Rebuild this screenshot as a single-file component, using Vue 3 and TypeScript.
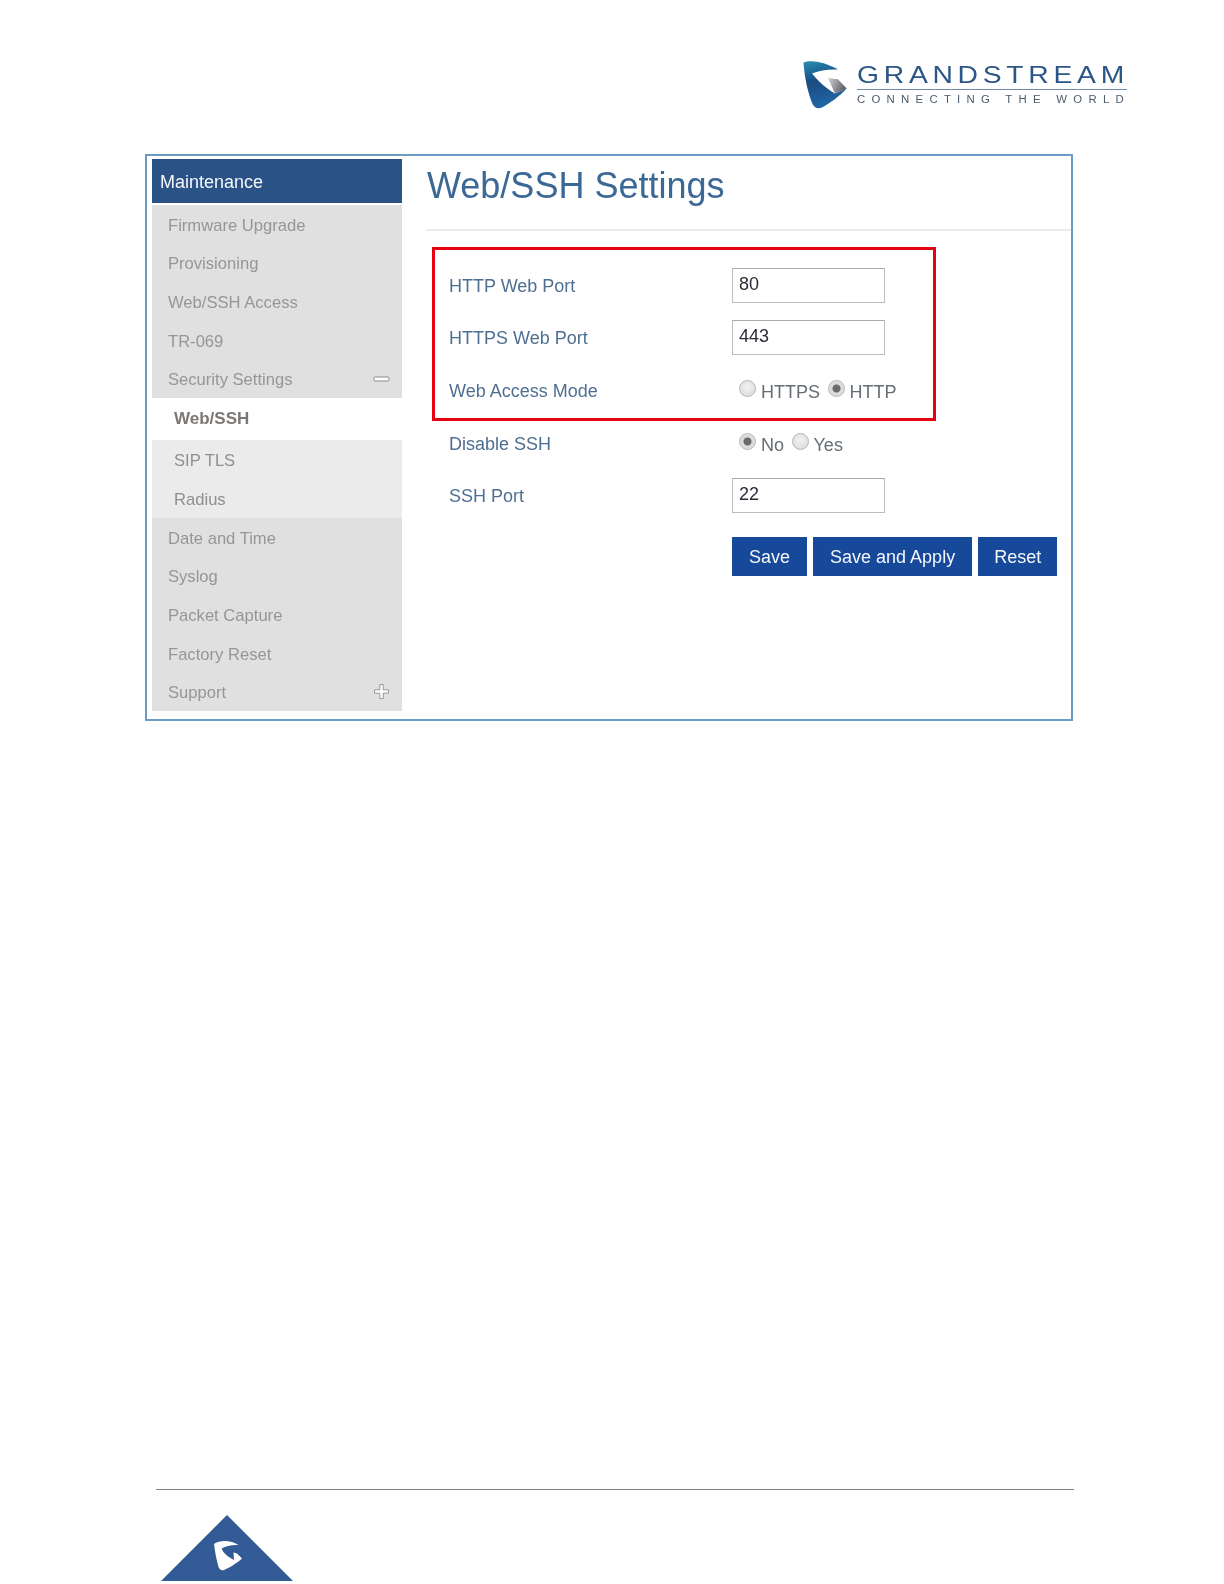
<script setup lang="ts">
interface Row { label: string; kind: 'input' | 'radio'; value?: string; options?: { text: string; on: boolean }[] }
const topItems = ['Firmware Upgrade', 'Provisioning', 'Web/SSH Access', 'TR-069', 'Security Settings']
const subItems = ['SIP TLS', 'Radius']
const lowerItems = ['Date and Time', 'Syslog', 'Packet Capture', 'Factory Reset', 'Support']
const boxed: Row[] = [
  { label: 'HTTP Web Port', kind: 'input', value: '80' },
  { label: 'HTTPS Web Port', kind: 'input', value: '443' },
  { label: 'Web Access Mode', kind: 'radio', options: [{ text: 'HTTPS', on: false }, { text: 'HTTP', on: true }] },
]
const open: Row[] = [
  { label: 'Disable SSH', kind: 'radio', options: [{ text: 'No', on: true }, { text: 'Yes', on: false }] },
  { label: 'SSH Port', kind: 'input', value: '22' },
]
const buttons = ['Save', 'Save and Apply', 'Reset']
</script>

<template>
  <div class="page">
    <header class="top">
      <svg class="logo" width="330" height="56" viewBox="0 0 330 56">
        <defs>
          <linearGradient id="gsBlue" x1="0" y1="0" x2="0.25" y2="1">
            <stop offset="0" stop-color="#2b8fb0" />
            <stop offset="0.22" stop-color="#1f6f9c" />
            <stop offset="0.45" stop-color="#1c4a80" />
            <stop offset="1" stop-color="#1f66a4" />
          </linearGradient>
          <linearGradient id="gsGray" x1="0" y1="0" x2="1" y2="0.4">
            <stop offset="0" stop-color="#d5d5d5" />
            <stop offset="1" stop-color="#5c5f63" />
          </linearGradient>
        </defs>
        <path d="M3.5 4.5C11 1.5 24 3.5 38 11.5C29 11 20 12 12 15.5C18 23 27 31 35 35.5L46.7 30.5C40 38 30 45 22 49.5C18 51 14.5 50 12.5 46C8 35 4.5 20 3.5 4.5Z" fill="url(#gsBlue)" />
        <path d="M28 20L38 21.3L46.7 30.5L35 35.5C32.5 30 30 25 28 20Z" fill="url(#gsGray)" />
        <text x="57" y="25" class="brand" textLength="272" lengthAdjust="spacingAndGlyphs">GRANDSTREAM</text>
        <rect x="57" y="31" width="270" height="1" fill="#6f8aaa" />
        <text x="57" y="45" class="tag" textLength="273" lengthAdjust="spacingAndGlyphs">CONNECTING THE WORLD</text>
      </svg>
    </header>

    <section class="panel">
      <aside class="side">
        <div class="side-head">Maintenance</div>
        <ul class="menu">
          <li v-for="item in topItems" :key="item" class="item">
            <span class="item-text">{{ item }}</span>
            <svg v-if="item === 'Security Settings'" class="ico" width="17" height="6" viewBox="0 0 17 6">
              <rect x="1" y="1" width="15" height="4" rx="1" fill="#fff" stroke="#8b8b8b" />
            </svg>
          </li>
        </ul>
        <div class="current">Web/SSH</div>
        <ul class="submenu">
          <li v-for="item in subItems" :key="item" class="subitem">{{ item }}</li>
        </ul>
        <ul class="menu">
          <li v-for="item in lowerItems" :key="item" class="item">
            <span class="item-text">{{ item }}</span>
            <svg v-if="item === 'Support'" class="ico" width="17" height="17" viewBox="0 0 17 17">
              <path d="M6.8 1.5H10.2V6.8H15.5V10.2H10.2V15.5H6.8V10.2H1.5V6.8H6.8Z" fill="#fff" stroke="#808080" stroke-width="0.8" />
            </svg>
          </li>
        </ul>
      </aside>

      <main class="main">
        <h1 class="title">Web/SSH Settings</h1>
        <div class="redbox">
          <div v-for="row in boxed" :key="row.label" class="row">
            <label class="label">{{ row.label }}</label>
            <div v-if="row.kind === 'input'" class="input">{{ row.value }}</div>
            <div v-else class="radios">
              <span v-for="o in row.options" :key="o.text" class="radio-opt">
                <i class="radio" :class="{ on: o.on }"></i>{{ o.text }}
              </span>
            </div>
          </div>
        </div>
        <div class="rest">
          <div v-for="row in open" :key="row.label" class="row">
            <label class="label">{{ row.label }}</label>
            <div v-if="row.kind === 'input'" class="input">{{ row.value }}</div>
            <div v-else class="radios">
              <span v-for="o in row.options" :key="o.text" class="radio-opt">
                <i class="radio" :class="{ on: o.on }"></i>{{ o.text }}
              </span>
            </div>
          </div>
          <div class="actions">
            <button v-for="b in buttons" :key="b" class="btn" type="button">{{ b }}</button>
          </div>
        </div>
      </main>
    </section>

    <footer class="foot">
      <div class="rule"></div>
      <svg class="tri" width="132" height="66" viewBox="0 0 132 66">
        <path d="M66 0L132 66H0Z" fill="#335c96" />
        <path d="M53 29C60 24.5 70 25.5 77.5 30C71 29.5 65 31 60.7 33.5C62 38 67 42 73 45L72.5 37.5L76 38.5L81 43.5C76 48 68 53 63 55C60 56 58.5 54 57.5 52C55.5 45 54 37 53 29Z" fill="#fff" />
      </svg>
    </footer>
  </div>
</template>

<style>
html, body { margin: 0; background: #fff; }
</style>

<style scoped>
.page {
  width: 1224px;
  height: 1584px;
  overflow: hidden;
  background: #fff;
  font-family: "Liberation Sans", Arial, sans-serif;
  display: flex;
  flex-direction: column;
}
.top {
  height: 154px;
  box-sizing: border-box;
  padding: 58px 0 0 800px;
}
.logo { display: block; filter: blur(0.4px); }
.brand {
  font-family: "Liberation Sans", sans-serif;
  font-size: 24px;
  letter-spacing: 4px;
  fill: #2c5687;
}
.tag {
  font-family: "Liberation Sans", sans-serif;
  font-size: 10px;
  letter-spacing: 5.5px;
  fill: #4d5a68;
}
.panel {
  margin-left: 145px;
  width: 928px;
  height: 567px;
  box-sizing: border-box;
  border: 2px solid #6b9bc3;
  padding: 3px 0 0 5px;
  display: flex;
}
.side { width: 250px; flex: none; filter: blur(0.35px); }
.side-head {
  height: 44px;
  line-height: 46px;
  margin-bottom: 2px;
  padding-left: 8px;
  background: #2a5286;
  color: #f4f7fa;
  font-size: 18px;
}
ul { list-style: none; margin: 0; padding: 0; }
.menu { background: #e0e0e0; }
.item {
  height: 38.6px;
  padding: 0 12px 0 16px;
  color: #969696;
  font-size: 16.6px;
  display: flex;
  justify-content: space-between;
  align-items: center;
}
.item-text { padding-top: 3px; }
.current {
  height: 42px;
  line-height: 42px;
  padding-left: 22px;
  color: #7b7774;
  font-size: 17px;
  font-weight: 700;
}
.submenu { background: #ebebeb; }
.subitem {
  height: 39px;
  line-height: 41px;
  padding-left: 22px;
  color: #8f8f8f;
  font-size: 16.6px;
}
.ico { display: block; flex: none; }
.main { flex: 1; margin-left: 24px; min-width: 0; }
.title {
  margin: 0;
  height: 72px;
  box-sizing: border-box;
  line-height: 54px;
  padding-left: 1px;
  border-bottom: 2px solid #ebebeb;
  color: #3c6896;
  font-size: 36px;
  font-weight: 400;
  filter: blur(0.3px);
}
.redbox {
  margin: 16px 0 0 6px;
  width: 504px;
  height: 174px;
  box-sizing: border-box;
  border: 3px solid #e60012;
  padding: 17px 0 0 14px;
  display: flex;
  flex-direction: column;
  gap: 16.5px;
}
.rest {
  margin: 4px 0 0 23px;
  display: flex;
  flex-direction: column;
  gap: 16.5px;
}
.row { display: flex; align-items: center; height: 36px; filter: blur(0.3px); }
.label { width: 283px; flex: none; padding-top: 2px; color: #4f6f92; font-size: 18px; }
.input {
  width: 153px;
  height: 35px;
  box-sizing: border-box;
  border: 1px solid #bdbdbd;
  border-top-color: #a9a9a9;
  padding-left: 6px;
  line-height: 31px;
  color: #2b2b3a;
  font-size: 18px;
  background: #fff;
}
.radios { display: flex; gap: 7.5px; padding: 4px 0 0 7px; color: #666d75; font-size: 18px; }
.radio-opt { display: inline-flex; align-items: center; line-height: 24px; }
.radio {
  width: 17px;
  height: 17px;
  margin: -7px 5px 0 0;
  box-sizing: border-box;
  border-radius: 50%;
  border: 1px solid #b5b5b5;
  background: radial-gradient(circle at 50% 40%, #f2f2f2, #d8d8d8);
}
.radio.on {
  background: radial-gradient(circle, #6a6a6a 0 3.5px, #d8d8d8 4.5px, #e6e6e6 100%);
}
.actions { display: flex; gap: 6px; margin: 6.5px 0 0 283px; filter: blur(0.3px); }
.btn {
  height: 39px;
  padding: 2px 17px 0;
  border: 0;
  background: #16499a;
  color: #f4f6fa;
  font-family: inherit;
  font-size: 18px;
}
.btn:last-child { padding: 2px 16px 0; }
.foot { margin-top: 768px; }
.rule { margin-left: 156px; width: 918px; height: 1px; background: #808080; }
.tri { display: block; margin: 25px 0 0 161px; filter: blur(0.3px); }
</style>
